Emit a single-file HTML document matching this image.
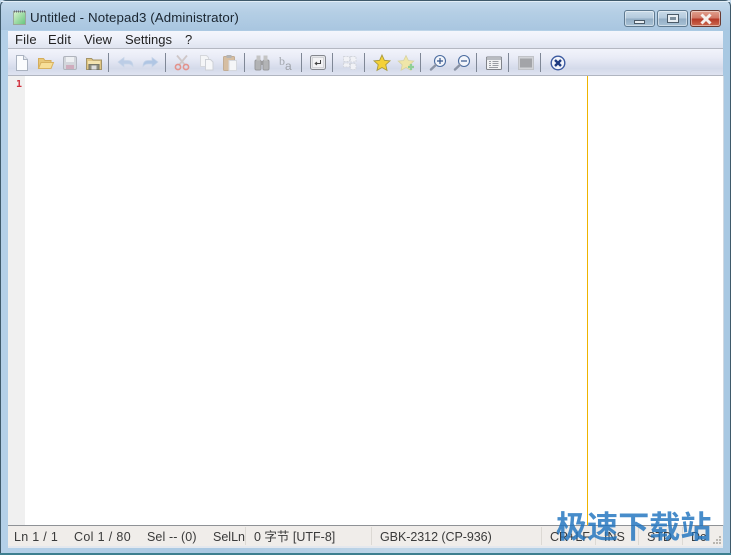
<!DOCTYPE html>
<html><head><meta charset="utf-8">
<style>
html,body{margin:0;padding:0;width:731px;height:555px;overflow:hidden;background:#fff}
*{box-sizing:border-box}
.a{position:absolute}
#win{position:absolute;left:0;top:0;width:731px;height:555px;border-radius:6px 6px 0 0;background:linear-gradient(90deg,#b4d0e8 0,#aac8e2 30%,#c0d6e8 55%,#b2cfe6 75%,#a8c8e2 100%);overflow:hidden}
#tbg{position:absolute;left:0;top:0;width:731px;height:30px;background:linear-gradient(180deg,#c5dbed 0,#b5cfe5 40%,#a9c6e0 100%)}
.t{position:absolute;font-family:"DejaVu Sans","Liberation Sans","Noto Sans CJK SC",sans-serif;white-space:nowrap;color:#1b1b1b}
.m{top:33px;line-height:14px;color:#222;font-family:"Liberation Sans",sans-serif;font-size:13px}
.s{font-size:12.5px;top:530px;line-height:14px;color:#3a3a3a;font-family:"Liberation Sans","Noto Sans CJK SC",sans-serif}
.sep{position:absolute;top:53px;width:1px;height:19px;background:#7f8796}
.sd{position:absolute;top:527px;width:1px;height:18px;background:#dcd9d4}
svg.i{position:absolute;top:54px;width:18px;height:18px;overflow:visible;filter:blur(.35px)}
.wb{position:absolute;top:10px;height:17px;border:1px solid #5f7a90;border-radius:3px;background:linear-gradient(180deg,#c9dbe9 0,#b3c9dc 48%,#93aec5 52%,#a8c2d6 100%);box-shadow:inset 0 0 0 1px rgba(255,255,255,.45)}
</style></head>
<body>
<div id="win"></div>
<div id="tbg" class="a"></div>
<div class="a" style="left:0;top:0;width:731px;height:555px;border:1px solid #3f5a6b;border-bottom:0;border-radius:6px 6px 0 0"></div>
<div class="a" style="left:0;top:553px;width:731px;height:2px;background:#3d7f8f"></div>
<div class="a" style="left:1px;top:1px;width:729px;height:1px;background:#e2eef7"></div>

<!-- title icon -->
<svg class="a" style="left:12px;top:10px" width="15" height="16" viewBox="0 0 15 16">
<defs><linearGradient id="g" x1="0" y1="0" x2="1" y2="1"><stop offset="0" stop-color="#dcf3cf"/><stop offset="1" stop-color="#63c47c"/></linearGradient></defs>
<rect x="1.5" y="1.5" width="12" height="13" fill="url(#g)" stroke="#9aa89a" stroke-width="1"/>
<path d="M2 1.5h1M4 1.5h1M6 1.5h1M8 1.5h1M10 1.5h1M12 1.5h1" stroke="#667" stroke-width="2"/>
</svg>
<div class="t" style="left:30px;top:10px;font-family:'Liberation Sans','DejaVu Sans',sans-serif;font-size:13.3px;line-height:16px;color:#1a2530;letter-spacing:.1px">Untitled - Notepad3 (Administrator)</div>

<!-- window buttons -->
<div class="wb" style="left:624px;width:31px"><div class="a" style="left:9px;top:9px;width:11px;height:4px;background:#e8eef3;border:1px solid #4a5a68"></div></div>
<div class="wb" style="left:657px;width:31px"><div class="a" style="left:9px;top:3px;width:12px;height:9px;background:#e8eef3;border:1px solid #4a5a68"><div class="a" style="left:2px;top:2px;width:6px;height:3px;background:#7d8f9d"></div></div></div>
<div class="wb" style="left:690px;width:31px;border-color:#6a3a32;background:linear-gradient(180deg,#e0a08f 0,#d27a68 45%,#b63a28 55%,#cc6a50 100%)">
<svg class="a" style="left:7px;top:2px" width="16" height="12" viewBox="0 0 16 12"><path d="M3.5 1.5L12.5 10.5M12.5 1.5L3.5 10.5" stroke="#f4f0ee" stroke-width="3"/></svg></div>

<!-- client -->
<div class="a" style="left:8px;top:31px;width:715px;height:517px;background:#fff"></div>
<!-- menu -->
<div class="a" style="left:8px;top:31px;width:715px;height:18px;background:linear-gradient(180deg,#f4f6fc 0,#eef1fa 40%,#dfe4f0 100%);border-bottom:1px solid #b4b8c2"></div>
<div class="t m" style="left:15px;letter-spacing:.2px">File</div>
<div class="t m" style="left:48px;letter-spacing:.2px">Edit</div>
<div class="t m" style="left:84px">View</div>
<div class="t m" style="left:125px">Settings</div>
<div class="t m" style="left:185px">?</div>
<!-- toolbar -->
<div class="a" style="left:8px;top:49px;width:715px;height:27px;background:linear-gradient(180deg,#f2f4fb 0,#e8ebf6 35%,#d4daea 75%,#dfe3f0 100%);border-bottom:1px solid #b0b5c0"></div>

<!-- toolbar icons -->
<svg class="i" style="left:13px" viewBox="0 0 18 18"><path d="M3.5 1.5h7l4 4v11h-11z" fill="#fbfcfe" stroke="#aab2c0"/><path d="M10.5 1.5v4h4" fill="#e4e8ef" stroke="#aab2c0"/></svg>
<svg class="i" style="left:37px" viewBox="0 0 18 18"><path d="M1.5 14.5v-10h5l1.500 2h6v8z" fill="#e8c878" stroke="#d4ac5c"/><path d="M1.500 14.500l2.500-6h12.500l-2.500 6z" fill="#f7df98" stroke="#d8b260"/></svg>
<svg class="i" style="left:61px" viewBox="0 0 18 18"><rect x="2.500" y="2.500" width="13" height="13" rx="1.500" fill="#d3d6dc" stroke="#b0b4bd"/><rect x="5" y="3" width="8" height="5" fill="#eef0f3"/><rect x="5" y="11" width="8" height="4" fill="#c97b97" opacity=".45"/></svg>
<svg class="i" style="left:85px" viewBox="0 0 18 18"><path d="M1.500 15.500v-11h5l1.500 1.500h8.500v9.500z" fill="#e0c683" stroke="#a49468"/><rect x="3" y="7" width="12" height="3" fill="#f3e3b0"/><rect x="4" y="10.500" width="10" height="5" fill="#8e8e7e" stroke="#77776a"/><rect x="6.500" y="11.500" width="5" height="4" fill="#ddd"/></svg>
<div class="sep" style="left:108px"></div>
<svg class="i" style="left:117px" viewBox="0 0 18 18"><path d="M1 8l6-4.500v3h4c3 0 5 2 5 6-1.500-2-3-2.500-5-2.500h-4v3z" fill="#bccde6" stroke="#c8d5e8" stroke-width=".7"/></svg>
<svg class="i" style="left:141px" viewBox="0 0 18 18"><path d="M17 8l-6-4.500v3h-4c-3 0-5 2-5 6 1.500-2 3-2.500 5-2.500h4v3z" fill="#b0c6e4" stroke="#c5d3e8" stroke-width=".7"/></svg>
<div class="sep" style="left:165px"></div>
<svg class="i" style="left:173px" viewBox="0 0 18 18"><path d="M4 1.500l8 9.500M14 1.500l-8 9.500" stroke="#cfc7c8" stroke-width="1.800"/><circle cx="5" cy="13" r="2.600" fill="none" stroke="#e3928c" stroke-width="1.600"/><circle cx="13" cy="13" r="2.600" fill="none" stroke="#e3928c" stroke-width="1.600"/></svg>
<svg class="i" style="left:198px" viewBox="0 0 18 18"><path d="M2.500 1.500h6l2 2v9h-8z" fill="#f4f5f7" stroke="#d5d7dc"/><path d="M7.500 5.500h5l2.500 2.500v8h-7.500z" fill="#f6f7f9" stroke="#cdd0d6"/></svg>
<svg class="i" style="left:221px" viewBox="0 0 18 18"><rect x="2.500" y="2.500" width="11" height="14" rx="1" fill="#d6bea2" stroke="#c2ad95"/><rect x="5.500" y="1" width="5" height="3" fill="#b4b4b4"/><rect x="8" y="6.500" width="7.500" height="10" fill="#f5f6f8" stroke="#d5d8de"/></svg>
<div class="sep" style="left:244px"></div>
<svg class="i" style="left:253px" viewBox="0 0 18 18"><rect x="2" y="6" width="6" height="10" rx="1.500" fill="#b2b3b5" stroke="#98999c"/><rect x="10" y="6" width="6" height="10" rx="1.500" fill="#b2b3b5" stroke="#98999c"/><rect x="3.500" y="1.500" width="4" height="5" fill="#c4c4c4"/><rect x="10.500" y="1.500" width="4" height="5" fill="#c4c4c4"/><rect x="7.500" y="7" width="3" height="4" fill="#9c9c9e"/></svg>
<div class="t" style="left:279px;top:55px;font-family:'Liberation Serif',serif;font-size:12px;line-height:12px;color:#a3a7ae">b</div>
<div class="t" style="left:285px;top:60px;font-family:'Liberation Sans',sans-serif;font-size:12px;line-height:12px;color:#9ea2a9">a</div>
<div class="sep" style="left:301px"></div>
<svg class="i" style="left:309px" viewBox="0 0 18 18"><rect x="1.500" y="1.500" width="15" height="14" rx="2" fill="#e6e7ea" stroke="#84878e"/><rect x="3.500" y="3.500" width="11" height="10" fill="#f3f3f5" stroke="#c3c5ca" stroke-width=".6"/><path d="M11.500 6v3.500H6.500M8 8l-1.800 1.500L8 11" fill="none" stroke="#444" stroke-width="1"/></svg>
<div class="sep" style="left:332px"></div>
<svg class="i" style="left:341px" viewBox="0 0 18 18"><g fill="#f1f2f6" stroke="#d3d6dd" stroke-dasharray="2 1"><rect x="2.500" y="2.500" width="6" height="5"/><rect x="9.500" y="2.500" width="5.500" height="5.500"/><rect x="9.500" y="9.500" width="5.500" height="6"/><rect x="2.500" y="9" width="6" height="4"/></g></svg>
<div class="sep" style="left:364px"></div>
<svg class="i" style="left:373px;top:54px" viewBox="0 0 18 18"><path d="M9 1l2.400 5.300 5.600.6-4.200 3.800 1.200 5.700L9 13.500l-5 2.900 1.200-5.700L1 6.900l5.600-.6z" fill="#f4d138" stroke="#a89a3e" stroke-width=".9"/></svg>
<svg class="i" style="left:397px;top:54px" viewBox="0 0 18 18"><path d="M9 1.500l2.400 5 5.400.6-4 3.700 1.100 5.400L9 13.500l-4.900 2.700 1.100-5.400-4-3.700 5.400-.6z" fill="#f0e6a8" stroke="#d6d2a2" stroke-width=".8"/><path d="M14 10v6M11 13h6" stroke="#8fcf96" stroke-width="2.200"/></svg>
<div class="sep" style="left:420px"></div>
<svg class="i" style="left:429px" viewBox="0 0 18 18"><circle cx="11" cy="7" r="5.500" fill="#f2f5fb" stroke="#4b6c9f" stroke-width="1.100"/><path d="M8 7h6M11 4v6" stroke="#33538a" stroke-width="1.200"/><path d="M6.800 11L2 15.500" stroke="#8a93a5" stroke-width="2.400" stroke-linecap="round"/></svg>
<svg class="i" style="left:453px" viewBox="0 0 18 18"><circle cx="11" cy="7" r="5.500" fill="#f2f5fb" stroke="#4b6c9f" stroke-width="1.100"/><path d="M8 7h6" stroke="#33538a" stroke-width="1.200"/><path d="M6.800 11L2 15.500" stroke="#8a93a5" stroke-width="2.400" stroke-linecap="round"/></svg>
<div class="sep" style="left:476px"></div>
<svg class="i" style="left:485px" viewBox="0 0 18 18"><rect x="1.500" y="3" width="15" height="12.500" rx="1" fill="#f1f2f4" stroke="#80838a"/><path d="M1.500 5h15" stroke="#a6aab2" stroke-width="1.500"/><path d="M4 7.500h2M7.500 7.500h6M4 9.500h2M7.500 9.500h6M4 11.500h2M7.500 11.500h6M4 13.500h9" stroke="#9a9da4" stroke-width=".9"/></svg>
<div class="sep" style="left:508px"></div>
<svg class="i" style="left:517px" viewBox="0 0 18 18"><rect x="1.500" y="2.500" width="15" height="13" fill="#d2d3d7" stroke="#c0c2c7"/><rect x="3" y="4.500" width="12" height="9" fill="#a3a4a8"/></svg>
<div class="sep" style="left:540px"></div>
<svg class="i" style="left:549px" viewBox="0 0 18 18"><circle cx="9" cy="9" r="6.800" fill="#f3f5fb" stroke="#3c5aa0" stroke-width="1.400"/><path d="M6 6l6 6M12 6l-6 6" stroke="#1e3a80" stroke-width="2.400"/></svg>

<!-- editor -->
<div class="a" style="left:8px;top:76px;width:17px;height:449px;background:#f0f0f0"></div>
<div class="t" style="left:16px;top:79px;font-family:'DejaVu Sans Mono','Liberation Mono',monospace;font-size:10px;font-weight:bold;line-height:12px;color:#d0303c">1</div>
<div class="a" style="left:587px;top:76px;width:1px;height:449px;background:#efb400"></div>
<div class="a" style="left:723px;top:76px;width:1px;height:449px;background:#cfd8e2"></div>

<!-- status -->
<div class="a" style="left:8px;top:525px;width:715px;height:1px;background:#8f9296"></div>
<div class="a" style="left:8px;top:526px;width:715px;height:20px;background:#f0edea"></div>
<div class="a" style="left:8px;top:546px;width:715px;height:2px;background:#e4e8ee"></div>
<div class="t s" style="left:14px;letter-spacing:.3px">Ln 1 / 1</div>
<div class="t s" style="left:74px;letter-spacing:.35px">Col 1 / 80</div>
<div class="t s" style="left:147px;letter-spacing:.1px">Sel -- (0)</div>
<div class="t s" style="left:213px">SelLn</div>
<div class="sd" style="left:245px"></div>
<div class="t s" style="left:254px">0 字节 [UTF-8]</div>
<div class="sd" style="left:371px"></div>
<div class="t s" style="left:380px;letter-spacing:-.05px">GBK-2312 (CP-936)</div>
<div class="sd" style="left:541px"></div>
<div class="t s" style="left:550px">CR+LF</div>
<div class="sd" style="left:595px"></div>
<div class="t s" style="left:604px">INS</div>
<div class="sd" style="left:638px"></div>
<div class="t s" style="left:647px">STD</div>
<div class="sd" style="left:682px"></div>
<div class="t s" style="left:691px">Dc</div>
<svg class="a" style="left:710px;top:535px" width="12" height="11" viewBox="0 0 12 11"><g fill="#b9b6b0"><rect x="9" y="1" width="2" height="2"/><rect x="6" y="4" width="2" height="2"/><rect x="9" y="4" width="2" height="2"/><rect x="3" y="7" width="2" height="2"/><rect x="6" y="7" width="2" height="2"/><rect x="9" y="7" width="2" height="2"/></g></svg>

<!-- watermark -->
<div class="t" style="left:556px;top:506px;font-family:'Noto Sans CJK SC','WenQuanYi Zen Hei',sans-serif;font-size:31px;font-weight:700;line-height:38px;letter-spacing:.1px;color:rgba(30,115,190,.82)">极速下载站</div>
</body></html>
